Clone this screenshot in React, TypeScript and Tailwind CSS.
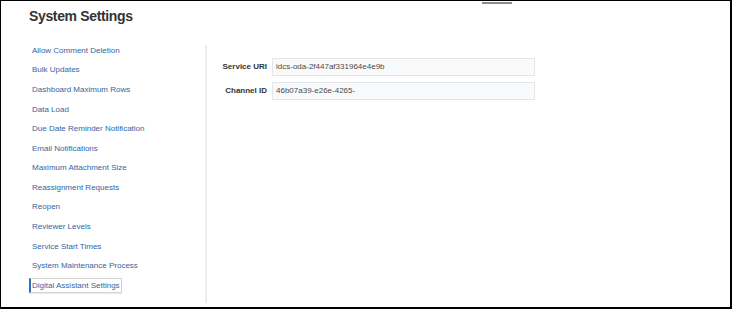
import React from "react";

const items = [
  "Allow Comment Deletion",
  "Bulk Updates",
  "Dashboard Maximum Rows",
  "Data Load",
  "Due Date Reminder Notification",
  "Email Notifications",
  "Maximum Attachment Size",
  "Reassignment Requests",
  "Reopen",
  "Reviewer Levels",
  "Service Start Times",
  "System Maintenance Process",
  "Digital Assistant Settings",
];

export default function App() {
  return (
    <div className="relative w-[732px] h-[309px] bg-white border-t border-l border-r-2 border-b-2 border-black overflow-hidden flex flex-col font-['Liberation_Sans',Arial,sans-serif]">
      <div className="absolute top-[1px] left-[481px] w-[30px] h-[2px] bg-[#8c8c8c]" />
      <h1 className="pl-[28px] pt-[7px] text-[14px] leading-[16px] font-bold tracking-[-0.35px] text-[#333333]">
        System Settings
      </h1>
      <div className="flex flex-1 mt-[17px]">
        <nav className="ml-[28px] w-[176px] flex flex-col">
          {items.map((t, i) => {
            const active = i === items.length - 1;
            return (
              <div key={t} className="h-[19.58px] flex items-center">
                {active ? (
                  <span className="h-[15px] flex items-center border-l-2 border-l-[#2d72c2] border-y border-r border-y-[#d4d4d4] border-r-[#cfcfcf] pl-[1px] pr-[1px] text-[8px] leading-[10px] text-[#3465a4] shadow-[0_1px_1px_rgba(0,0,0,0.08)]">
                    {t}
                  </span>
                ) : (
                  <span className="pl-[3px] text-[8px] leading-[10px] text-[#3465a4]">{t}</span>
                )}
              </div>
            );
          })}
        </nav>
        <div className="w-[2px] mt-[4px] mb-[4px] bg-[#eeeeee]" />
        <div className="pt-[17px]">
          <div className="grid grid-cols-[60px_263px] gap-x-[5px] gap-y-[6px] items-center">
            <span className="text-right text-[8px] leading-[10px] font-bold text-[#333333]">Service URI</span>
            <div className="h-[18px] border border-[#e2e5e9] bg-[#f9fafb] flex items-center pl-[3px] text-[8px] text-[#4a4a4a]">
              idcs-oda-2f447af331964e4e9b
            </div>
            <span className="text-right text-[8px] leading-[10px] font-bold text-[#333333]">Channel ID</span>
            <div className="h-[18px] border border-[#e2e5e9] bg-[#f9fafb] flex items-center pl-[3px] text-[8px] text-[#4a4a4a]">
              46b07a39-e26e-4265-
            </div>
          </div>
        </div>
      </div>
    </div>
  );
}
